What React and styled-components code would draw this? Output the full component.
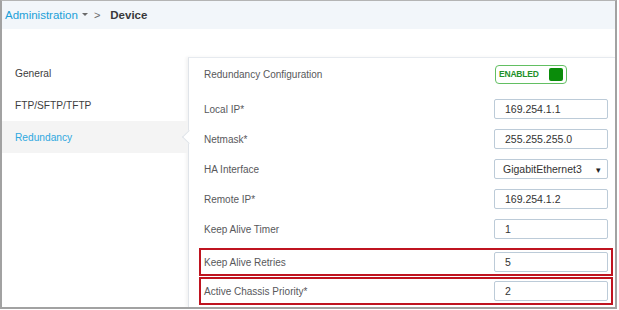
import React from 'react'
import styled, { createGlobalStyle, css } from 'styled-components'

const GlobalStyle = createGlobalStyle`
    html, body {
        margin:0;
        padding:0;
        background:#fff;
    }
    body{
        font-family:"Liberation Sans", Arial, sans-serif;
    }
`

const fields = [
    { label: 'Local IP*', value: '169.254.1.1' },
    { label: 'Netmask*', value: '255.255.255.0' },
    { label: 'HA Interface', value: 'GigabitEthernet3', select: true },
    { label: 'Remote IP*', value: '169.254.1.2' },
    { label: 'Keep Alive Timer', value: '1' },
]

const App = () => {
    return (
        <>
            <GlobalStyle />
            <Frame>
                <Header>
                    <Crumb>Administration</Crumb>
                    <Caret />
                    <Sep>&gt;</Sep>
                    <Current>Device</Current>
                </Header>
                <Body>
                    <Sidebar>
                        <NavItem>General</NavItem>
                        <NavItem>FTP/SFTP/TFTP</NavItem>
                        <NavItem $active>Redundancy</NavItem>
                    </Sidebar>
                    <Panel>
                        <Row $h={32} $mb={4}>
                            <Label>Redundancy Configuration</Label>
                            <Toggle>
                                <span>ENABLED</span>
                                <Knob />
                            </Toggle>
                        </Row>
                        {fields.map(f => (
                            <Row key={f.label} $h={30}>
                                <Label>{f.label}</Label>
                                {f.select ? (
                                    <Select>
                                        <span>{f.value}</span>
                                        <Arrow>▾</Arrow>
                                    </Select>
                                ) : (
                                    <Input>{f.value}</Input>
                                )}
                            </Row>
                        ))}
                        <Row $h={28} $mt={4} $hl>
                            <Label>Keep Alive Retries</Label>
                            <Input>5</Input>
                        </Row>
                        <Row $h={28} $mt={1} $hl>
                            <Label>Active Chassis Priority*</Label>
                            <Input>2</Input>
                        </Row>
                    </Panel>
                </Body>
            </Frame>
        </>
    )
}

const Frame = styled.div`
    width:617px;
    height:309px;
    box-sizing:border-box;
    border:2px solid #a2a2a2;
    border-top:1px solid #b4b4b4;
    display:flex;
    flex-direction:column;
    overflow:hidden;
`

const Header = styled.div`
    height:28px;
    flex:none;
    background:#f2f6fa;
    display:flex;
    align-items:center;
    padding-left:3px;
    font-size:11.5px;
`

const Crumb = styled.span`
    color:#1ba0d8;
`

const Caret = styled.span`
    width:0;
    height:0;
    margin:0 6px 2px 4px;
    border-left:3px solid transparent;
    border-right:3px solid transparent;
    border-top:3px solid #6a6a6a;
`

const Sep = styled.span`
    color:#6a6a6a;
    font-size:11px;
    margin-right:10px;
`

const Current = styled.span`
    color:#39393b;
    font-weight:bold;
`

const Body = styled.div`
    flex:1;
    display:flex;
    min-height:0;
`

const Sidebar = styled.div`
    width:186px;
    flex:none;
    padding-top:28px;
    display:flex;
    flex-direction:column;
`

const notch = css`
    &::after{
        content:"";
        position:absolute;
        right:-6px;
        top:50%;
        width:9px;
        height:9px;
        margin-top:-5px;
        background:#fff;
        border-left:1px solid #dfe3e8;
        border-bottom:1px solid #dfe3e8;
        transform:rotate(45deg);
        z-index:2;
    }
`

const NavItem = styled.div`
    height:32px;
    display:flex;
    align-items:center;
    padding-left:13px;
    font-size:10.2px;
    color:${p => (p.$active ? '#2fa8e0' : '#3d3d3d')};
    background:${p => (p.$active ? '#f4f4f4' : 'transparent')};
    position:relative;
    ${p => p.$active && notch}
`

const Panel = styled.div`
    flex:1;
    margin-top:28px;
    border-top:1px solid #e6eaef;
    border-left:1px solid #e0e4e9;
    box-shadow:-2px 0 3px rgba(0,0,0,0.05);
    display:flex;
    flex-direction:column;
`

const Row = styled.div`
    height:${p => p.$h}px;
    margin:${p => p.$mt || 0}px 2px ${p => p.$mb || 0}px 10px;
    padding:0 3px;
    box-sizing:border-box;
    border:2px solid ${p => (p.$hl ? '#bf1420' : 'transparent')};
    display:flex;
    align-items:center;
    justify-content:space-between;
    flex:none;
`

const Label = styled.span`
    font-size:10px;
    color:#58585b;
`

const Input = styled.div`
    width:114px;
    height:20px;
    box-sizing:border-box;
    border:1px solid #bccbd8;
    border-radius:2px;
    padding-left:10px;
    display:flex;
    align-items:center;
    font-size:10.5px;
    color:#333;
    background:#fff;
`

const Select = styled(Input)`
    padding:0 6px 0 8px;
    justify-content:space-between;
`

const Arrow = styled.span`
    font-size:9px;
    color:#222;
    margin-top:2px;
`

const Toggle = styled.div`
    width:72px;
    height:19px;
    margin-right:41px;
    box-sizing:border-box;
    border:1.5px solid #62bf62;
    border-radius:4px;
    display:flex;
    align-items:center;
    justify-content:space-between;
    padding:0 3px 0 3px;
    span{
        font-size:8.5px;
        font-weight:bold;
        color:#23912a;
        letter-spacing:-0.2px;
    }
`

const Knob = styled.div`
    width:14px;
    height:13px;
    border-radius:2px;
    background:#0a8c0a;
`

export default App
